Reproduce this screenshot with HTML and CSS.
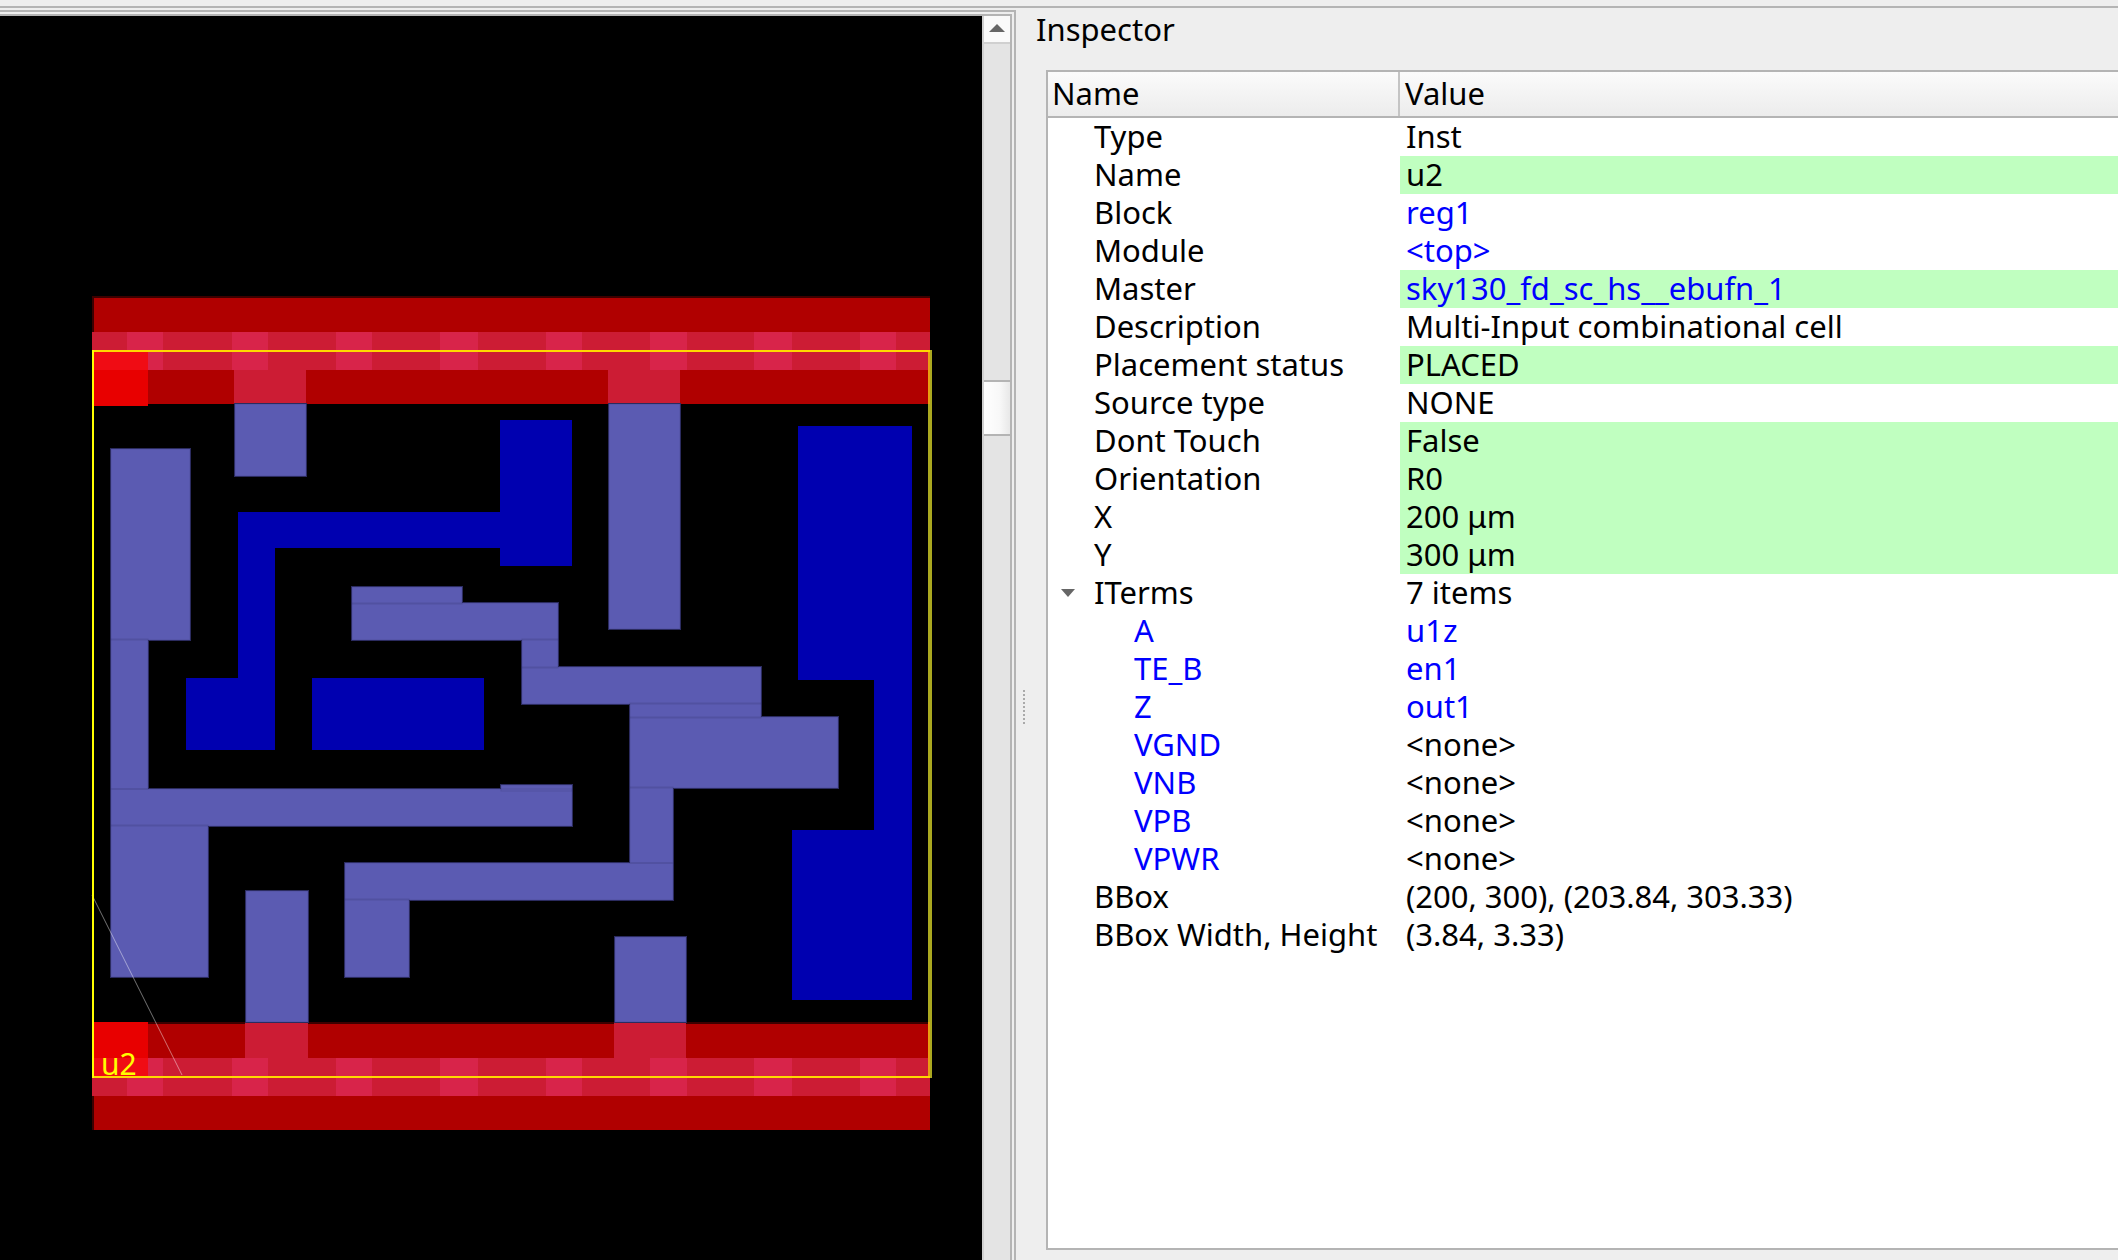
FILE: index.html
```html
<!DOCTYPE html>
<html lang="en">
<head>
    <meta charset="UTF-8">
    <title>Inspector</title>
    <link rel="stylesheet" href="styles.css">
</head>
<body>

<div class="top-strip"></div>

<div class="main">
    <div class="outer-frame">
        <div class="inner-frame">
            <div class="layout-frame">
                <svg class="layout-view" width="982" height="1244" viewBox="0 16 982 1244">
                    <defs>
                        <g id="met1">
                            <rect x="235" y="404" width="71" height="72"/>
                            <rect x="111" y="449" width="79" height="191"/>
                            <rect x="111" y="639" width="37" height="150"/>
                            <rect x="501" y="785" width="71" height="6"/>
                            <rect x="111" y="789" width="461" height="37"/>
                            <rect x="111" y="825" width="97" height="152"/>
                            <rect x="246" y="891" width="62" height="131"/>
                            <rect x="345" y="863" width="328" height="37"/>
                            <rect x="345" y="899" width="64" height="78"/>
                            <rect x="630" y="787" width="43" height="76"/>
                            <rect x="630" y="717" width="208" height="71"/>
                            <rect x="522" y="667" width="239" height="37"/>
                            <rect x="630" y="703" width="131" height="15"/>
                            <rect x="522" y="639" width="36" height="29"/>
                            <rect x="352" y="603" width="206" height="37"/>
                            <rect x="352" y="587" width="110" height="17"/>
                            <rect x="609" y="404" width="71" height="225"/>
                            <rect x="615" y="937" width="71" height="85"/>
                        </g>
                    </defs>

                    <!-- power rails -->
                    <rect class="rail-edge" x="92" y="296" width="838" height="108"/>
                    <rect class="rail" x="94" y="298" width="836" height="106"/>
                    <rect class="rail-edge" x="92" y="1022" width="838" height="108"/>
                    <rect class="rail" x="94" y="1024" width="836" height="106"/>

                    <!-- rail stripes, top and bottom -->
                    <g class="stripe">
                        <rect x="92" y="332" width="838" height="38"/>
                        <rect x="92" y="1058" width="838" height="38"/>
                    </g>
                    <g class="stripe-light">
                        <rect x="127" y="332" width="36" height="38"/><rect x="232" y="332" width="36" height="38"/>
                        <rect x="336" y="332" width="36" height="38"/><rect x="440" y="332" width="38" height="38"/>
                        <rect x="546" y="332" width="36" height="38"/><rect x="650" y="332" width="37" height="38"/>
                        <rect x="754" y="332" width="38" height="38"/><rect x="860" y="332" width="36" height="38"/>
                        <rect x="127" y="1058" width="36" height="38"/><rect x="232" y="1058" width="36" height="38"/>
                        <rect x="336" y="1058" width="36" height="38"/><rect x="440" y="1058" width="38" height="38"/>
                        <rect x="546" y="1058" width="36" height="38"/><rect x="650" y="1058" width="37" height="38"/>
                        <rect x="754" y="1058" width="38" height="38"/><rect x="860" y="1058" width="36" height="38"/>
                    </g>

                    <!-- pin over rail -->
                    <g class="stripe">
                        <rect x="234" y="370" width="72" height="34"/>
                        <rect x="608" y="370" width="72" height="34"/>
                        <rect x="245" y="1022" width="63" height="36"/>
                        <rect x="614" y="1022" width="72" height="36"/>
                    </g>

                    <!-- corner of the cell -->
                    <rect class="corner" x="94" y="352" width="54" height="54"/>
                    <rect class="corner-stripe" x="94" y="352" width="54" height="18"/>
                    <rect class="corner" x="94" y="1022" width="54" height="36"/>
                    <rect class="corner-stripe" x="94" y="1058" width="54" height="18"/>

                    <!-- met2 -->
                    <g class="metal">
                        <rect x="500" y="420" width="72" height="146"/>
                        <rect x="238" y="512" width="262" height="36"/>
                        <rect x="238" y="548" width="37" height="130"/>
                        <rect x="186" y="678" width="89" height="72"/>
                        <rect x="312" y="678" width="172" height="72"/>
                        <rect x="798" y="426" width="114" height="254"/>
                        <rect x="874" y="680" width="38" height="150"/>
                        <rect x="792" y="830" width="120" height="170"/>
                    </g>

                    <!-- met1: edge, fill, then the faint seams between shapes -->
                    <use class="met1-edge" href="#met1"/>
                    <use class="met1-fill" href="#met1"/>
                    <use class="met1-seam" href="#met1"/>

                    <!-- instance outline -->
                    <line class="origin-mark" x1="92" y1="895" x2="182" y2="1075"/>
                    <line class="outline-dim" x1="930" y1="350" x2="930" y2="1078"/>
                    <line class="outline-rail" x1="929" y1="352" x2="929" y2="404"/>
                    <line class="outline-rail" x1="929" y1="1022" x2="929" y2="1076"/>
                    <line class="outline" x1="92" y1="351" x2="930" y2="351"/>
                    <line class="outline" x1="92" y1="1077" x2="930" y2="1077"/>
                    <line class="outline-left" x1="93" y1="350" x2="93" y2="1078"/>
                    <text class="inst-name" x="101" y="1075">u2</text>
                </svg>
            </div>

            <div class="scrollbar">
                <div class="scroll-btn"><span class="arrow-up"></span></div>
                <div class="scroll-handle"></div>
            </div>
        </div>
    </div>

    <div class="splitter"><span class="grip"></span></div>

    <div class="inspector">
        <div class="inspector-title">Inspector</div>
        <div class="tree">
            <div class="tree-head">
                <div class="head-name">Name</div>
                <div class="head-value">Value</div>
            </div>
            <div class="row"><div class="name">Type</div><div class="value">Inst</div></div>
            <div class="row"><div class="name">Name</div><div class="value edit">u2</div></div>
            <div class="row"><div class="name">Block</div><div class="value link">reg1</div></div>
            <div class="row"><div class="name">Module</div><div class="value link">&lt;top&gt;</div></div>
            <div class="row"><div class="name">Master</div><div class="value edit link">sky130_fd_sc_hs__ebufn_1</div></div>
            <div class="row"><div class="name">Description</div><div class="value">Multi-Input combinational cell</div></div>
            <div class="row"><div class="name">Placement status</div><div class="value edit">PLACED</div></div>
            <div class="row"><div class="name">Source type</div><div class="value">NONE</div></div>
            <div class="row"><div class="name">Dont Touch</div><div class="value edit">False</div></div>
            <div class="row"><div class="name">Orientation</div><div class="value edit">R0</div></div>
            <div class="row"><div class="name">X</div><div class="value edit">200 μm</div></div>
            <div class="row"><div class="name">Y</div><div class="value edit">300 μm</div></div>
            <div class="row"><div class="name"><span class="expander"></span>ITerms</div><div class="value">7 items</div></div>
            <div class="row"><div class="name child link">A</div><div class="value link">u1z</div></div>
            <div class="row"><div class="name child link">TE_B</div><div class="value link">en1</div></div>
            <div class="row"><div class="name child link">Z</div><div class="value link">out1</div></div>
            <div class="row"><div class="name child link">VGND</div><div class="value">&lt;none&gt;</div></div>
            <div class="row"><div class="name child link">VNB</div><div class="value">&lt;none&gt;</div></div>
            <div class="row"><div class="name child link">VPB</div><div class="value">&lt;none&gt;</div></div>
            <div class="row"><div class="name child link">VPWR</div><div class="value">&lt;none&gt;</div></div>
            <div class="row"><div class="name">BBox</div><div class="value">(200, 300), (203.84, 303.33)</div></div>
            <div class="row"><div class="name">BBox Width, Height</div><div class="value">(3.84, 3.33)</div></div>
        </div>
    </div>
</div>

</body>
</html>
```

FILE: styles.css
```css
html, body {
    margin: 0;
    padding: 0;
    height: 100%;
    overflow: hidden;
}
body {
    background-color: #eeeeee;
    color: #000;
    font-family: "Noto Sans", sans-serif;
    font-size: 31px;
    display: flex;
    flex-direction: column;
}
.top-strip {
    height: 6px;
    flex: none;
    border-bottom: 2px solid #b4b4b4;
}
.main {
    display: flex;
    flex: 1;
    min-height: 0;
}

/* frames round the layout view */
.outer-frame {
    flex: none;
    margin-top: 2px;
    padding: 2px 2px 0 0;
    border-top: 2px solid #b4b4b4;
    border-right: 2px solid #b4b4b4;
}
.inner-frame {
    display: flex;
    height: 100%;
    border-top: 2px solid #b4b4b4;
    border-right: 2px solid #b4b4b4;
}

/* layout view */
.layout-frame {
    width: 982px;
    flex: none;
    background-color: #000;
}
.layout-view {
    display: block;
}
.rail-edge { fill: #3c0000; }
.rail { fill: #b00000; }
.stripe rect { fill: #cc1c34; }
.stripe-light rect { fill: #d8244a; }
.corner { fill: #e80000; }
.corner-stripe { fill: #f00c14; }
.metal rect { fill: #0000b0; }
.met1-edge {
    fill: none;
    stroke: #2c2c60;
    stroke-width: 2px;
}
.met1-fill { fill: #5b5bb2; }
.met1-seam {
    fill: none;
    stroke: rgba(44, 44, 96, 0.2);
    stroke-width: 1px;
}
.origin-mark {
    stroke: rgba(255, 255, 255, 0.45);
    stroke-width: 1px;
}
.outline {
    stroke: #ffd800;
    stroke-width: 2px;
}
.outline-left {
    stroke: #ffff00;
    stroke-width: 2px;
}
.outline-dim {
    stroke: #aaa820;
    stroke-width: 4px;
}
.outline-rail {
    stroke: #e8a010;
    stroke-width: 2px;
}
.inst-name {
    fill: #ffff00;
    font-size: 30px;
}

/* scroll bar */
.scrollbar {
    width: 26px;
    flex: none;
    background-color: #e4e4e4;
    border-left: 2px solid #d0d0d0;
}
.scroll-btn {
    height: 26px;
    background-color: #fafafa;
    border-bottom: 2px solid #d0d0d0;
    display: flex;
    align-items: center;
    justify-content: center;
}
.arrow-up {
    width: 0;
    height: 0;
    margin-bottom: 2px;
    border-left: 8px solid transparent;
    border-right: 8px solid transparent;
    border-bottom: 8px solid #666;
}
.scroll-handle {
    height: 52px;
    margin-top: 336px;
    background: linear-gradient(to right, #ffffff, #f8f8f8 60%, #e8e8e8);
    border-top: 2px solid #b4b4b4;
    border-bottom: 2px solid #b4b4b4;
}

/* splitter */
.splitter {
    width: 13px;
    flex: none;
    padding: 682px 0 0 7px;
}
.grip {
    display: block;
    height: 34px;
    border-left: 2px dotted #aaa;
}

/* inspector */
.inspector {
    flex: 1;
    min-width: 0;
    display: flex;
    flex-direction: column;
}
.inspector-title {
    height: 62px;
    line-height: 42px;
    flex: none;
}
.tree {
    height: 1180px;
    flex: none;
    margin-left: 10px;
    box-sizing: border-box;
    background-color: #fff;
    border-left: 2px solid #b4b4b4;
    border-top: 2px solid #b4b4b4;
    border-bottom: 2px solid #b4b4b4;
}
.tree-head {
    display: flex;
    height: 44px;
    line-height: 42px;
    border-bottom: 2px solid #b4b4b4;
    background: linear-gradient(#fbfbfb, #ececec);
}
.head-name {
    width: 352px;
    padding-left: 4px;
    box-sizing: border-box;
    border-right: 2px solid #c4c4c4;
}
.head-value {
    padding-left: 5px;
}
.row {
    display: flex;
    height: 38px;
    line-height: 36px;
}
.name {
    width: 352px;
    flex: none;
    box-sizing: border-box;
    padding-left: 46px;
    position: relative;
    white-space: nowrap;
}
.name.child {
    padding-left: 86px;
}
.value {
    flex: 1;
    padding-left: 6px;
    white-space: nowrap;
}
.edit {
    background-color: #c0ffc0;
}
.link {
    color: #0000ff;
}
.expander {
    position: absolute;
    left: 13px;
    top: 15px;
    width: 0;
    height: 0;
    border-left: 7px solid transparent;
    border-right: 7px solid transparent;
    border-top: 8px solid #666;
}
```
